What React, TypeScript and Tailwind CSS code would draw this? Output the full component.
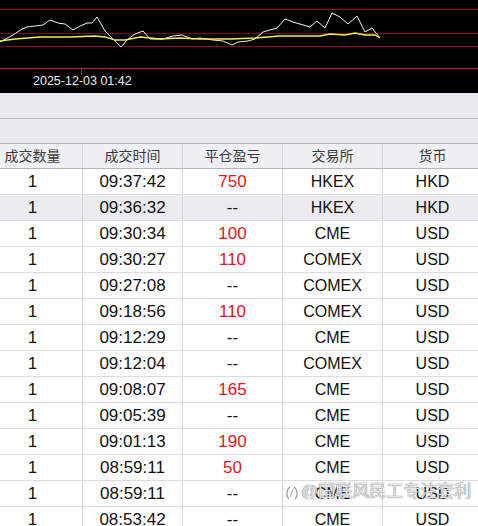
import React from "react";

const rows = [
  { time: "09:37:42", pnl: "750", ex: "HKEX", cur: "HKD" },
  { time: "09:36:32", pnl: "--", ex: "HKEX", cur: "HKD" },
  { time: "09:30:34", pnl: "100", ex: "CME", cur: "USD" },
  { time: "09:30:27", pnl: "110", ex: "COMEX", cur: "USD" },
  { time: "09:27:08", pnl: "--", ex: "COMEX", cur: "USD" },
  { time: "09:18:56", pnl: "110", ex: "COMEX", cur: "USD" },
  { time: "09:12:29", pnl: "--", ex: "CME", cur: "USD" },
  { time: "09:12:04", pnl: "--", ex: "COMEX", cur: "USD" },
  { time: "09:08:07", pnl: "165", ex: "CME", cur: "USD" },
  { time: "09:05:39", pnl: "--", ex: "CME", cur: "USD" },
  { time: "09:01:13", pnl: "190", ex: "CME", cur: "USD" },
  { time: "08:59:11", pnl: "50", ex: "CME", cur: "USD" },
  { time: "08:59:11", pnl: "--", ex: "CME", cur: "USD" },
  { time: "08:53:42", pnl: "--", ex: "CME", cur: "USD" },
];

const headers = ["成交数量", "成交时间", "平仓盈亏", "交易所", "货币"];

const whiteLine =
  "0,42 13,35 22,29 27,27 35,26 43,25 50,20 58,23 65,24 73,30 80,26 87,23 92,23 97,17 105,31 113,39 121,47 128,39 135,34 143,31 150,39 163,39 173,36 182,35 187,37 192,39 200,38 213,40 223,41 232,45 238,42 248,41 255,39 263,32 277,28 285,19 293,22 310,27 317,21 325,28 332,13 340,17 348,24 357,16 365,32 372,28 380,38";
const yellowLine =
  "0,41 15,39 40,37 70,37 95,36 105,37 115,40 125,40 140,37 160,39 180,38 200,39 230,39 255,38 280,36 320,36 330,34 345,35 355,33 365,35 375,35 380,38";

const Chart = () => (
  <div className="relative h-[93px] bg-black">
    <svg width="478" height="93" className="absolute left-0 top-0">
      <line x1="0" y1="9.5" x2="478" y2="9.5" stroke="#6e1414" />
      <line x1="0" y1="33.5" x2="478" y2="33.5" stroke="#6e1414" />
      <line x1="0" y1="46.5" x2="478" y2="46.5" stroke="#6e1414" />
      <line x1="0" y1="68.5" x2="478" y2="68.5" stroke="#b8282c" />
      <line x1="81.5" y1="68" x2="81.5" y2="75" stroke="#b8282c" />
      <polyline points={whiteLine} fill="none" stroke="#f2f2f2" strokeWidth="1" />
      <polyline points={yellowLine} fill="none" stroke="#f0f050" strokeWidth="1.3" />
    </svg>
    <div className="absolute left-[33px] top-[74px] text-[12.5px] leading-[14px] text-[#ececec]">
      2025-12-03 01:42
    </div>
  </div>
);

const Cell = ({ children, className = "" }: { children: React.ReactNode; className?: string }) => (
  <div className={`flex w-[100px] shrink-0 items-center justify-center border-r border-[#d6d6d8] ${className}`}>
    {children}
  </div>
);

export default function App() {
  return (
    <div className="relative h-[526px] w-[478px] overflow-hidden bg-white font-['Liberation_Sans','Noto_Sans_CJK_SC',sans-serif]">
      <Chart />
      <div className="h-[26px] border-b border-[#bdbec2] bg-[#e9eaee]" />
      <div className="h-[25px] border-b border-[#b4b5b9] bg-[#e9eaee]" />
      <div className="ml-[-17px] flex h-[25px] border-b border-[#b4b5b9] bg-[#eff0f4] text-[14px] text-[#3a3a3a]">
        {headers.map((h) => (
          <Cell key={h}>{h}</Cell>
        ))}
      </div>
      <div className="ml-[-17px] text-[17px] text-[#111]">
        {rows.map((r, i) => (
          <div
            key={i}
            className={`flex h-[26px] border-b border-[#dcdcde] ${i === 1 ? "bg-[#ebebef]" : "bg-white"}`}
          >
            <Cell>1</Cell>
            <Cell>{r.time}</Cell>
            <Cell className={r.pnl === "--" ? "" : "text-[#e8121c]"}>{r.pnl}</Cell>
            <Cell className="text-[16px]">{r.ex}</Cell>
            <Cell className="text-[16px]">{r.cur}</Cell>
          </div>
        ))}
      </div>
      <div className="absolute left-[285px] top-[482px] flex items-center gap-[2px] whitespace-nowrap text-[17px] leading-[20px] text-white/80 [text-shadow:0_0_1px_#777,0_0_1px_#777]">
        <svg width="14" height="18" viewBox="0 0 14 18" className="mt-[2px] shrink-0">
          <path d="M5 3 C1 6 1 12 4 15" fill="none" stroke="#999" strokeWidth="1.2" />
          <path d="M9 3 C13 6 13 12 10 15" fill="none" stroke="#999" strokeWidth="1.2" />
          <path d="M8 5 L5 13" fill="none" stroke="#aaa" strokeWidth="1" />
        </svg>
        <span>@国联风民工专注套利</span>
      </div>
    </div>
  );
}
